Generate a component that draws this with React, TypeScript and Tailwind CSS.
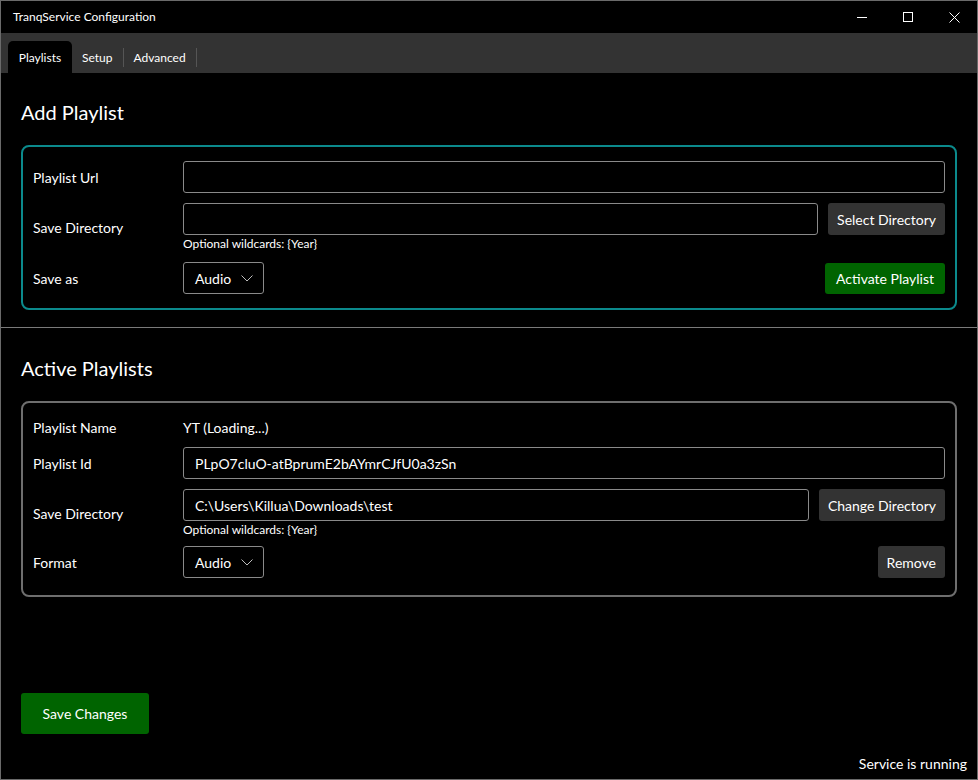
import React from "react";

const font = { fontFamily: "'Segoe UI', Lato, 'Open Sans', sans-serif" };

function Chevron() {
  return (
    <svg width="12" height="7" viewBox="0 0 12 7" fill="none">
      <path d="M0.5 0.5 L6 6 L11.5 0.5" stroke="#bdbdbd" strokeWidth="1" />
    </svg>
  );
}

function Select() {
  return (
    <div className="flex h-[32px] w-[81px] items-center justify-between rounded-[3px] border border-[#8a8a8a] pl-[11px] pr-[10px] text-[14px] text-white">
      <span>Audio</span>
      <Chevron />
    </div>
  );
}

function Input({ value, className = "" }: { value?: string; className?: string }) {
  return (
    <div
      className={
        "flex h-[32px] items-center rounded-[3px] border border-[#8a8a8a] px-[11px] text-[14px] text-white " +
        className
      }
    >
      {value}
    </div>
  );
}

function Label({ children }: { children: React.ReactNode }) {
  return <div className="w-[150px] shrink-0 text-[14px] text-white">{children}</div>;
}

export default function App() {
  return (
    <div
      className="flex h-[780px] w-[978px] flex-col overflow-hidden border border-[#6a6a6a] bg-black text-white"
      style={font}
    >
      {/* Title bar */}
      <div className="flex h-[32px] shrink-0 items-center justify-between">
        <div className="pl-[12px] text-[12px]">TranqService Configuration</div>
        <div className="flex h-full items-center">
          <div className="flex h-full w-[46px] items-center justify-center">
            <div className="h-px w-[10px] bg-white" />
          </div>
          <div className="flex h-full w-[46px] items-center justify-center">
            <div className="h-[10px] w-[10px] border border-white" />
          </div>
          <div className="flex h-full w-[46px] items-center justify-center">
            <svg width="11" height="11" viewBox="0 0 11 11">
              <path d="M0.5 0.5 L10.5 10.5 M10.5 0.5 L0.5 10.5" stroke="white" strokeWidth="1" />
            </svg>
          </div>
        </div>
      </div>

      {/* Tab strip */}
      <div className="flex h-[40px] shrink-0 items-end bg-[#333333] pl-[7px] text-[12px]">
        <div className="flex h-[32px] w-[64px] items-center justify-center rounded-t-[5px] bg-black pt-px">
          Playlists
        </div>
        <div className="flex h-[32px] items-center pt-px">
          <span className="px-[10px]">Setup</span>
          <div className="h-[19px] w-px bg-[#555]" />
          <span className="px-[10px]">Advanced</span>
          <div className="h-[19px] w-px bg-[#555]" />
        </div>
      </div>

      {/* Add Playlist */}
      <div className="px-[20px] pt-[26px]">
        <div className="text-[20px] leading-[26px]">Add Playlist</div>
        <div className="mt-[20px] rounded-[8px] border-2 border-[#0b8a8c] px-[10px] pb-[14px] pt-[14px]">
          <div className="flex items-center">
            <Label>Playlist Url</Label>
            <Input className="flex-1" />
          </div>
          <div className="mt-[10px] flex items-center">
            <Label>Save Directory</Label>
            <div className="flex flex-1 gap-[10px]">
              <div className="flex flex-1 flex-col">
                <Input />
                <div className="mt-[1px] text-[12px] leading-[16px]">Optional wildcards: {"{Year}"}</div>
              </div>
              <div className="flex h-[32px] items-center rounded-[3px] bg-[#333333] px-[9px] text-[14px]">
                Select Directory
              </div>
            </div>
          </div>
          <div className="mt-[10px] flex items-center justify-between">
            <div className="flex items-center">
              <Label>Save as</Label>
              <Select />
            </div>
            <div className="flex h-[31px] items-center rounded-[3px] bg-[#006400] px-[11px] text-[14px]">
              Activate Playlist
            </div>
          </div>
        </div>
      </div>

      <div className="mt-[17px] h-px w-full bg-[#7a7a7a]" />

      {/* Active Playlists */}
      <div className="px-[20px] pt-[27px]">
        <div className="text-[20px] leading-[26px]">Active Playlists</div>
        <div className="mt-[20px] rounded-[8px] border-2 border-[#6e6e6e] px-[10px] pb-[17px] pt-[14px]">
          <div className="flex h-[20px] items-center">
            <Label>Playlist Name</Label>
            <span className="text-[14px]">YT (Loading...)</span>
          </div>
          <div className="mt-[10px] flex items-center">
            <Label>Playlist Id</Label>
            <Input className="flex-1" value="PLpO7cluO-atBprumE2bAYmrCJfU0a3zSn" />
          </div>
          <div className="mt-[10px] flex items-center">
            <Label>Save Directory</Label>
            <div className="flex flex-1 gap-[10px]">
              <div className="flex flex-1 flex-col">
                <Input value="C:\Users\Killua\Downloads\test" />
                <div className="mt-[1px] text-[12px] leading-[16px]">Optional wildcards: {"{Year}"}</div>
              </div>
              <div className="flex h-[32px] items-center rounded-[3px] bg-[#333333] px-[9px] text-[14px]">
                Change Directory
              </div>
            </div>
          </div>
          <div className="mt-[8px] flex items-center justify-between">
            <div className="flex items-center">
              <Label>Format</Label>
              <Select />
            </div>
            <div className="flex h-[32px] items-center rounded-[3px] bg-[#333333] px-[9px] text-[14px]">
              Remove
            </div>
          </div>
        </div>
      </div>

      <div className="flex-1" />

      <div className="px-[20px]">
        <div className="flex h-[41px] w-[128px] items-center justify-center rounded-[3px] bg-[#006400] text-[14px]">
          Save Changes
        </div>
      </div>
      <div className="flex justify-end pb-[5px] pr-[10px] pt-[19px] text-[14px]">Service is running</div>
    </div>
  );
}
